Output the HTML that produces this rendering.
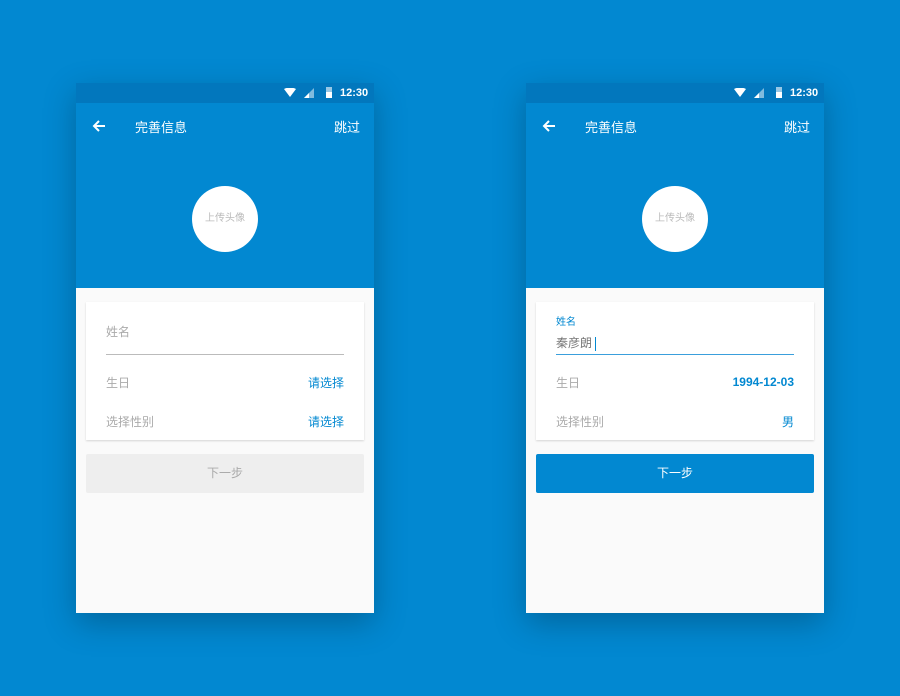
<!DOCTYPE html>
<html><head><meta charset="utf-8"><style>
*{margin:0;padding:0;box-sizing:border-box}
body{width:900px;height:696px;background:#0288d1;position:relative;overflow:hidden;font-family:"Liberation Sans","Noto Sans CJK SC",sans-serif}
.ph{position:absolute;top:83px;width:298px;height:530px;background:#fafafa;box-shadow:0 10px 30px rgba(0,0,0,.25)}
.sb{position:absolute;left:0;top:0;width:298px;height:20px;background:#0277bd;color:#fff;font-size:11px;font-weight:bold}
.hd{position:absolute;left:0;top:20px;width:298px;height:185px;background:#0288d1;color:#fff}
.t{position:absolute;font-size:13px}
.av{position:absolute;left:116px;top:83px;width:66px;height:66px;border-radius:50%;background:#fff;color:#bbb;font-size:10px;text-align:center;line-height:66px}
.cd{position:absolute;left:10px;top:219px;width:278px;height:138px;background:#fff;box-shadow:0 1px 2px rgba(0,0,0,.15)}
.l{position:absolute;left:20px;font-size:12px;color:#aaa}
.r{position:absolute;right:20px;font-size:12px;color:#0288d1}
.ln{position:absolute;left:20px;width:238px;top:52px;height:1px;background:#bbb}
.bt{position:absolute;left:10px;top:371px;width:278px;height:39px;font-size:12px;text-align:center;line-height:39px;border-radius:2px}
</style></head><body>
<div class="ph" style="left:76px">
<div class="sb"><svg style="position:absolute;left:208px;top:5px" width="12" height="10"><path d="M0 1Q6-2 12 1L6 9Z" fill="#fff"/></svg><svg style="position:absolute;left:228px;top:5px" width="10" height="10"><path d="M10 0V10H0Z" fill="#fff" opacity=".5"/><path d="M5 5V10H0Z" fill="#fff"/></svg><div style="position:absolute;left:250px;top:4px;width:6px;height:11px;background:#fff;opacity:.6"></div><div style="position:absolute;left:250px;top:9px;width:6px;height:6px;background:#fff"></div><span style="position:absolute;left:264px;top:4px">12:30</span></div>
<div class="hd"><svg style="position:absolute;left:16px;top:16px" width="14" height="14"><path d="M13 7H2M7 2L2 7L7 12" stroke="#fff" stroke-width="2" fill="none"/></svg><span class="t" style="left:59px;top:14px">完善信息</span><span class="t" style="left:258px;top:14px">跳过</span><div class="av">上传头像</div></div>
<div class="cd"><span class="l" style="top:21px">姓名</span><div class="ln"></div><span class="l" style="top:72px">生日</span><span class="r" style="top:72px">请选择</span><span class="l" style="top:111px">选择性别</span><span class="r" style="top:111px">请选择</span></div>
<div class="bt" style="background:#eee;color:#aaa">下一步</div>
</div>
<div class="ph" style="left:526px">
<div class="sb"><svg style="position:absolute;left:208px;top:5px" width="12" height="10"><path d="M0 1Q6-2 12 1L6 9Z" fill="#fff"/></svg><svg style="position:absolute;left:228px;top:5px" width="10" height="10"><path d="M10 0V10H0Z" fill="#fff" opacity=".5"/><path d="M5 5V10H0Z" fill="#fff"/></svg><div style="position:absolute;left:250px;top:4px;width:6px;height:11px;background:#fff;opacity:.6"></div><div style="position:absolute;left:250px;top:9px;width:6px;height:6px;background:#fff"></div><span style="position:absolute;left:264px;top:4px">12:30</span></div>
<div class="hd"><svg style="position:absolute;left:16px;top:16px" width="14" height="14"><path d="M13 7H2M7 2L2 7L7 12" stroke="#fff" stroke-width="2" fill="none"/></svg><span class="t" style="left:59px;top:14px">完善信息</span><span class="t" style="left:258px;top:14px">跳过</span><div class="av">上传头像</div></div>
<div class="cd"><span class="l" style="top:11px;font-size:10px;color:#0288d1">姓名</span><span class="l" style="top:32px;color:#777">秦彦朗 <span style="display:inline-block;width:1px;height:14px;background:#0288d1;vertical-align:middle"></span></span><div class="ln" style="background:#3a9fdc"></div><span class="l" style="top:72px">生日</span><span class="r" style="top:73px;font-weight:bold">1994-12-03</span><span class="l" style="top:111px">选择性别</span><span class="r" style="top:111px">男</span></div>
<div class="bt" style="background:#0288d1;color:#fff">下一步</div>
</div>
</body></html>
